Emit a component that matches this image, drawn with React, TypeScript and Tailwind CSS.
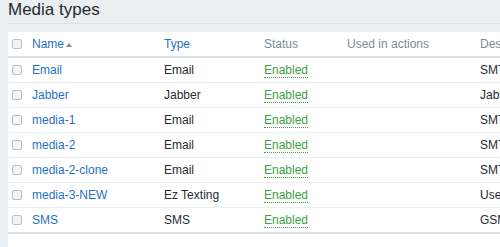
const rows = [
  { name: "Email", type: "Email", desc: "SMTP server \"mail.example.com\", SMTP helo \"example.com\", SMTP email \"zabbix@example.com\"" },
  { name: "Jabber", type: "Jabber", desc: "Jabber identifier \"jabber@example.com\"" },
  { name: "media-1", type: "Email", desc: "SMTP server \"localhost\", SMTP helo \"localhost\"" },
  { name: "media-2", type: "Email", desc: "SMTP server \"localhost\", SMTP helo \"localhost\"" },
  { name: "media-2-clone", type: "Email", desc: "SMTP server \"localhost\", SMTP helo \"localhost\"" },
  { name: "media-3-NEW", type: "Ez Texting", desc: "Username \"username\"" },
  { name: "SMS", type: "SMS", desc: "GSM modem \"/dev/ttyS0\"" },
];

function Checkbox() {
  return <span className="block w-[10px] h-[10px] rounded-[2px] border border-[#b5c0c6] bg-[#f2f4f5]" />;
}

const cols = "grid grid-cols-[24px_132px_100px_83px_133px_300px] items-center";

export default function App() {
  return (
    <div
      className="w-[500px] h-[247px] overflow-hidden bg-[#ebeef0] pl-[8px] text-[12px] text-[#1f2c33]"
      style={{ fontFamily: '"Liberation Sans", Arial, sans-serif' }}
    >
      {/* Page title */}
      <div className="h-[24px] border-b border-[#dde2e5]">
        <h1 className="pt-[1px] text-[17px] leading-[17px] font-normal text-[#1f2c33]">Media types</h1>
      </div>

      {/* List */}
      <div className="mt-[8px] w-[700px] h-[300px] bg-white">
        <div className={`${cols} h-[26px] border-b-2 border-[#dde2e5]`}>
          <div className="pl-[4px]"><Checkbox /></div>
          <div className="flex items-center gap-[2px] text-[#1f72c4]">
            Name
            <span className="mt-[2px] w-0 h-0 border-l-[3px] border-r-[3px] border-b-[4px] border-l-transparent border-r-transparent border-b-[#7c8e98]" />
          </div>
          <div className="text-[#1f72c4]">Type</div>
          <div className="text-[#768d99]">Status</div>
          <div className="text-[#768d99]">Used in actions</div>
          <div className="text-[#768d99]">Description</div>
        </div>
        {rows.map((r) => (
          <div key={r.name} className={`${cols} h-[25px] border-b border-[#ebeef0] last:border-b-2 last:h-[26px] last:border-[#dde2e5]`}>
            <div className="pl-[4px]"><Checkbox /></div>
            <div className="text-[#1f72c4]">{r.name}</div>
            <div>{r.type}</div>
            <div>
              <span className="text-[#429e47] border-b border-dotted border-[#429e47]">Enabled</span>
            </div>
            <div />
            <div className="whitespace-nowrap">{r.desc}</div>
          </div>
        ))}
      </div>
    </div>
  );
}
